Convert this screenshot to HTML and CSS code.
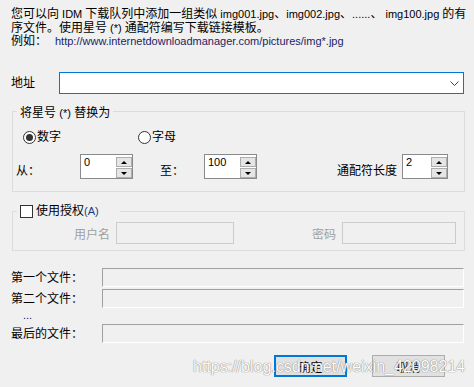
FILE: index.html
```html
<!DOCTYPE html>
<html>
<head>
<meta charset="utf-8">
<link rel="stylesheet" href="styles.css">
</head>
<body>
<div class="dlg">
  <div class="intro">
    <div>您可以向<span class="lat"> IDM </span>下载队列中添加一组类似<span class="lat"> img001.jpg</span>、<span class="lat">img002.jpg</span>、<span class="lat">......</span>、<span class="lat"> img100.jpg </span>的有</div>
    <div>序文件。使用星号<span class="lat"> (*) </span>通配符编写下载链接模板。</div>
    <div><span class="eg">例如：</span><span class="lat url">http://www.internetdownloadmanager.com/pictures/img*.jpg</span></div>
  </div>

  <div class="addr-row">
    <span class="addr-label">地址</span>
    <div class="combo">
      <svg class="chev" width="9" height="5" viewBox="0 0 9 5"><polyline points="0.5,0.5 4.5,4.5 8.5,0.5" fill="none" stroke="#444" stroke-width="1"/></svg>
    </div>
  </div>

  <fieldset class="group g1">
    <legend>将星号 <span class="lat">(*)</span> 替换为</legend>
    <div class="radios">
      <span class="radio first"><span class="rdot on"></span>数字</span>
      <span class="radio"><span class="rdot"></span>字母</span>
    </div>
    <div class="spins">
      <span class="lbl from">从：</span>
      <div class="spin"><div class="field">0</div><div class="btns"><span class="sbtn up"></span><span class="sbtn dn"></span></div></div>
      <span class="lbl to">至：</span>
      <div class="spin"><div class="field">100</div><div class="btns"><span class="sbtn up"></span><span class="sbtn dn"></span></div></div>
      <span class="lbl len">通配符长度</span>
      <div class="spin narrow"><div class="field">2</div><div class="btns"><span class="sbtn up"></span><span class="sbtn dn"></span></div></div>
    </div>
  </fieldset>

  <fieldset class="group g2">
    <legend><span class="chk-wrap"><span class="chk"></span>使用授权<span class="lat acc">(A)</span></span></legend>
    <div class="auth-row">
      <span class="user-lbl">用户名</span>
      <div class="in user"></div>
      <span class="pw-lbl">密码</span>
      <div class="in pw"></div>
    </div>
  </fieldset>

  <div class="files">
    <div class="frow"><span class="flabel">第一个文件：</span><div class="fbox"></div></div>
    <div class="frow"><span class="flabel">第二个文件：</span><div class="fbox"></div></div>
    <div class="dots">...</div>
    <div class="frow"><span class="flabel">最后的文件：</span><div class="fbox"></div></div>
  </div>

  <div class="actions">
    <button class="dbtn def">确定</button>
    <button class="dbtn">取消</button>
  </div>

  <div class="watermark">https://blog.csdn.net/weixin_42098214</div>
</div>
</body>
</html>
```
FILE: styles.css
```css
html, body {
  margin: 0;
  padding: 0;
}
body {
  background: #f0f0f0;
  font-family: "Liberation Sans", "Noto Sans CJK SC", sans-serif;
  font-size: 12px;
  color: #000;
  width: 474px;
  height: 387px;
  overflow: hidden;
}
.dlg {
  position: relative;
  height: 387px;
}
.intro {
  padding: 8px 0 0 11px;
  line-height: 13.5px;
  white-space: nowrap;
}
.lat {
  font-size: 11px;
}
.url {
  color: #1c2466;
}
.eg {
  display: inline-block;
  width: 44px;
}

.addr-row {
  display: flex;
  align-items: center;
  margin-top: 23.5px;
  padding-left: 11px;
}
.addr-label {
  width: 48px;
  line-height: 16px;
}
.combo {
  width: 405px;
  height: 22px;
  box-sizing: border-box;
  border: 1px solid #0078d7;
  background: #fff;
  display: flex;
  align-items: center;
  justify-content: flex-end;
  padding-right: 4px;
}
.chev {
  display: block;
}

.group {
  margin: 0 9px 0 12px;
  padding: 0;
  border: 1px solid #dcdcdc;
  min-width: 0;
}
.group legend {
  margin-left: 4px;
  line-height: 14px;
}
.g1 {
  margin-top: 9px;
  padding: 10px 0 12px;
}
.g1 legend {
  padding: 3px 3px 0;
}
.radios {
  display: flex;
  align-items: center;
  height: 15px;
  padding-left: 10px;
}
.radio {
  display: inline-flex;
  align-items: center;
  gap: 1px;
  line-height: 15px;
}
.radio.first {
  width: 115px;
}
.rdot {
  width: 13px;
  height: 13px;
  box-sizing: border-box;
  border: 1px solid #333;
  border-radius: 50%;
  background: #fff;
  display: flex;
  align-items: center;
  justify-content: center;
}
.rdot.on::after {
  content: "";
  width: 7px;
  height: 7px;
  border-radius: 50%;
  background: #333;
}

.spins {
  display: flex;
  align-items: flex-end;
  margin-top: 9px;
  padding-left: 3px;
}
.lbl {
  line-height: 15px;
}
.from {
  width: 64px;
}
.to {
  margin-left: 27px;
  width: 44px;
}
.len {
  margin-left: 80px;
  width: 65px;
}
.spin {
  display: flex;
  width: 53px;
  height: 25px;
  box-sizing: border-box;
  border: 1px solid #8a8a8a;
  background: #fff;
}
.spin.narrow {
  width: 46px;
}
.field {
  flex: 1;
  padding: 1px 0 0 3px;
  font-size: 11px;
  line-height: 13px;
}
.btns {
  width: 16px;
  display: flex;
  flex-direction: column;
  gap: 1px;
  padding-top: 2px;
}
.sbtn {
  height: 10px;
  box-sizing: border-box;
  border: 1px solid #adadad;
  background: #e5e5e5;
  display: flex;
  align-items: center;
  justify-content: center;
}
.sbtn.up::after {
  content: "";
  border-left: 3px solid transparent;
  border-right: 3px solid transparent;
  border-bottom: 3px solid #000;
}
.sbtn.dn::after {
  content: "";
  border-left: 3px solid transparent;
  border-right: 3px solid transparent;
  border-top: 3px solid #000;
}

.g2 {
  margin-top: 12px;
  padding: 4px 0 6px;
}
.g2 legend {
  padding: 0 21px 0 3px;
}
.chk-wrap {
  display: inline-flex;
  align-items: center;
  line-height: 14px;
  vertical-align: top;
}
.chk {
  width: 13px;
  height: 13px;
  box-sizing: border-box;
  border: 1px solid #333;
  background: #fff;
  margin-right: 3px;
}
.acc {
  color: #1c3a7a;
}
.auth-row {
  display: flex;
  align-items: center;
  padding-left: 61px;
  color: #a0a0a0;
}
.user-lbl {
  width: 36px;
  margin-right: 6px;
}
.in {
  height: 22px;
  box-sizing: border-box;
  border: 1px solid #cccccc;
  background: #f0f0f0;
}
.in.user {
  width: 118px;
}
.pw-lbl {
  margin-left: 78px;
  width: 24px;
  margin-right: 6px;
}
.in.pw {
  width: 114px;
}

.files {
  margin-top: 17px;
  padding-left: 11px;
}
.frow {
  display: flex;
  align-items: center;
}
.frow + .frow {
  margin-top: 2px;
}
.flabel {
  width: 91px;
  line-height: 14px;
}
.fbox {
  width: 362px;
  height: 19px;
  box-sizing: border-box;
  border: 1px solid;
  border-color: #a0a0a0 #fff #fff #a0a0a0;
}
.dots {
  height: 16px;
  padding-left: 12px;
  line-height: 15px;
  font-size: 11px;
  color: #1c2466;
}

.actions {
  display: flex;
  justify-content: flex-end;
  gap: 25px;
  padding-right: 29px;
  margin-top: 12px;
}
.dbtn {
  width: 73px;
  height: 22px;
  box-sizing: border-box;
  border: 1px solid #adadad;
  background: #e1e1e1;
  font: inherit;
  color: #000;
  padding: 0;
  margin: 0;
  display: flex;
  align-items: center;
  justify-content: center;
}
.dbtn.def {
  border: 2px solid #0078d7;
}

.watermark {
  position: absolute;
  left: 193px;
  top: 358px;
  font-family: "Liberation Sans", sans-serif;
  font-size: 16px;
  color: #fcfcfc;
  text-shadow: 0 0 1px #808080, 0 0 1px #909090;
  white-space: nowrap;
  pointer-events: none;
}
```
